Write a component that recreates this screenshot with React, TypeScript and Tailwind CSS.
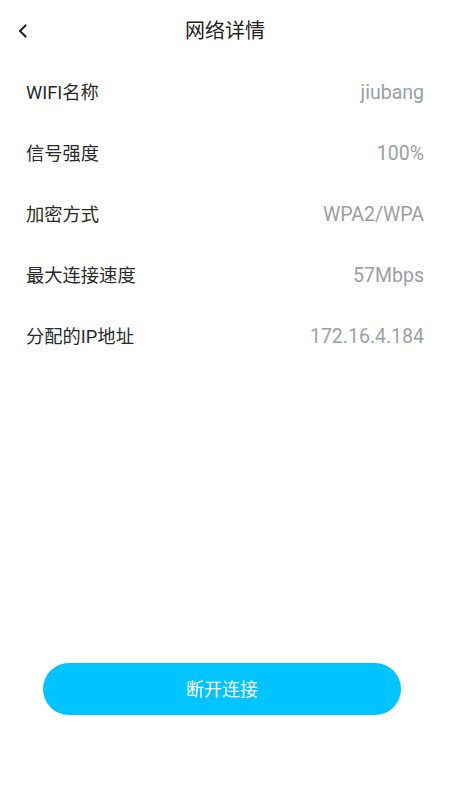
import React from "react";

const rows = [
  { label: "WIFI名称", value: "jiubang" },
  { label: "信号强度", value: "100%" },
  { label: "加密方式", value: "WPA2/WPA" },
  { label: "最大连接速度", value: "57Mbps" },
  { label: "分配的IP地址", value: "172.16.4.184" },
];

export default function App() {
  return (
    <div
      className="flex h-[800px] w-[450px] flex-col bg-white"
      style={{ fontFamily: '"Roboto", "Noto Sans CJK SC", sans-serif' }}
    >
      {/* Header */}
      <div className="relative flex h-[62px] items-center justify-center">
        <button className="absolute left-[13px] top-[21px] flex h-5 w-5 items-center justify-center">
          <svg width="12" height="14" viewBox="0 0 12 14" fill="none">
            <path d="M8.5 1.5L3 7l5.5 5.5" stroke="#222" strokeWidth="2.2" strokeLinecap="round" strokeLinejoin="round" />
          </svg>
        </button>
        <h1 className="text-[20px] text-[#222]">网络详情</h1>
      </div>

      {/* Rows */}
      <div className="flex flex-col px-[26px]">
        {rows.map((r) => (
          <div key={r.label} className="flex h-[61px] items-center justify-between">
            <span className="text-[18.3px] text-[#2a2a2a]">{r.label}</span>
            <span className="text-[19.5px] text-[#9a9fa4]">{r.value}</span>
          </div>
        ))}
      </div>

      <div className="flex-1" />

      {/* Disconnect button */}
      <div className="flex pb-[85px] pl-[43px]">
        <button className="h-[52px] w-[358px] rounded-full bg-[#00c3ff] text-[18px] text-white">
          断开连接
        </button>
      </div>
    </div>
  );
}
